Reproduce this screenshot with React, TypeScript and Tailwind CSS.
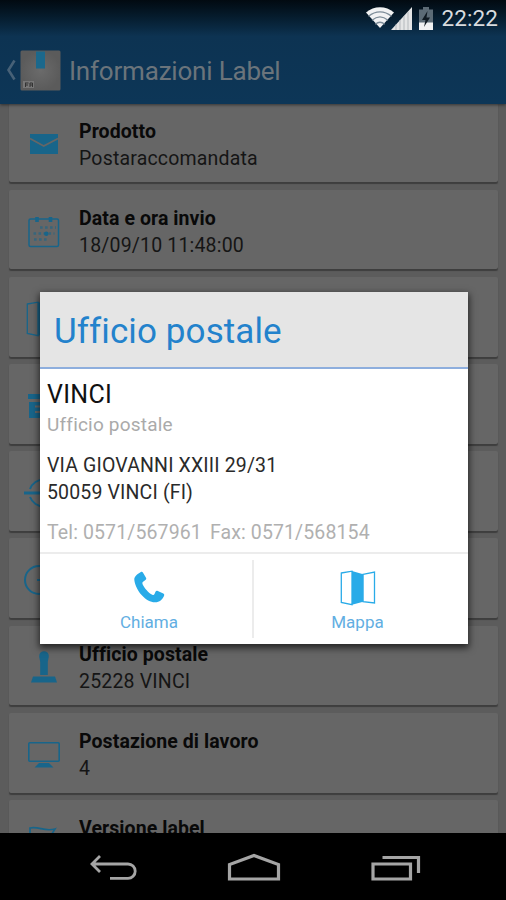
import React from 'react';

const CalendarIcon = () => (
  <svg width="32" height="32" viewBox="0 0 32 32" fill="none" stroke="currentColor" strokeWidth="1.5">
    <rect x="1" y="3" width="29.5" height="27.5" rx="1.5" />
    <path d="M9 1v5M22.5 1v5" strokeWidth="3.6" />
    <path d="M12 11.5h16M5.5 17.5h21M6 23.5h15" strokeWidth="2.4" strokeDasharray="2.6 2.4" opacity=".6" />
    <circle cx="18.3" cy="17.8" r="2.2" fill="currentColor" stroke="none" />
  </svg>
);

const MapIcon = () => (
  <svg width="36" height="36" viewBox="0 0 36 36" fill="none" stroke="currentColor" strokeWidth="1.3">
    <path d="M1.3 3 12 1.2v33.4L1.3 32.4zM23 4.3 34.5 2v31L23 31.6z" />
    <path d="M12 1 23.2 4.2v27.6L12 34.8z" fill="currentColor" stroke="none" />
  </svg>
);

const rows = [
  {
    title: 'Prodotto',
    value: 'Postaraccomandata',
    icon: (
      <svg width="28" height="20" viewBox="0 0 28 20">
        <path d="M0 0h28v20H0z" fill="currentColor" />
        <path d="M0 4.5 13.7 12 28 4.5" fill="none" stroke="#666666" strokeWidth="1.7" />
      </svg>
    ),
  },
  { title: 'Data e ora invio', value: '18/09/10 11:48:00', icon: <CalendarIcon /> },
  { title: '', value: '', icon: <MapIcon /> },
  {
    title: '',
    value: '',
    icon: (
      <svg width="32" height="24" viewBox="0 0 32 24" fill="currentColor">
        <path d="M0 0h32v5H0zM1 8h30v16H1z" />
        <path d="M7 12.5h14M7 18h14" stroke="#666666" strokeWidth="2" />
      </svg>
    ),
  },
  {
    title: '',
    value: '',
    icon: (
      <svg width="42" height="42" viewBox="0 0 42 42" fill="none" stroke="currentColor" strokeWidth="2">
        <path d="M7 17a15 15 0 0 1 28 0M7 25a15 15 0 0 0 28 0" />
        <path d="M1 21h40" strokeWidth="3" />
      </svg>
    ),
  },
  {
    title: '',
    value: '',
    icon: (
      <svg width="42" height="32" viewBox="0 0 42 32" fill="none" stroke="currentColor" strokeWidth="2">
        <circle cx="16" cy="16" r="14" />
        <path d="M14 16h10" />
      </svg>
    ),
  },
  {
    title: 'Ufficio postale',
    value: '25228 VINCI',
    icon: (
      <svg width="26" height="34" viewBox="0 0 26 34" fill="currentColor">
        <path d="M8.2 6a4.8 4.8 0 0 1 9.6 0c0 2-.8 4-1 6v13H9.2V12c-.2-2-1-4-1-6z" />
        <path d="M2 26.5h22l2 6H0z" />
      </svg>
    ),
  },
  {
    title: 'Postazione di lavoro',
    value: '4',
    icon: (
      <svg width="32" height="26" viewBox="0 0 32 26">
        <rect x=".8" y=".8" width="30.4" height="18.4" rx="1" fill="none" stroke="currentColor" strokeWidth="1.6" />
        <path d="M11 21h10l4.5 4.5h-19z" fill="currentColor" />
      </svg>
    ),
  },
  {
    title: 'Versione label',
    value: '',
    icon: (
      <svg width="32" height="34" viewBox="0 0 32 34" fill="none" stroke="currentColor" strokeWidth="1.7">
        <path d="M2 32V3c9-2 14 4 25 1l-5 8 5 7c-10 3-18-3-24-1" />
      </svg>
    ),
  },
];

const StatusBar = () => (
  <div className="flex h-9 items-center justify-end pr-[8px] text-[#d9dcdf]">
    <svg width="28" height="22" viewBox="0 0 28 22">
      <path d="M0 5.5C8-1.6 20-1.6 28 5.5L14 21z" fill="#f1f2f3" />
      <path d="M2.5 9.3c7-5.9 16-5.9 23 0M6 13.3c5-4.2 11-4.2 16 0M9.3 17.2c3-2.5 6.4-2.5 9.4 0" fill="none" stroke="#7d8c98" strokeWidth="1.3" />
    </svg>
    <svg className="-ml-[3px]" width="21" height="23" viewBox="0 0 21 23">
      <path d="M0 23 21 0v23z" fill="#e4e5e6" />
      <path d="M5 17.5V23M9 13v10M13 9v14M17 5v18" stroke="#b3b8bc" strokeWidth="1" />
    </svg>
    <svg className="ml-[7px]" width="14" height="23" viewBox="0 0 14 23">
      <path d="M4 0h6v2.5h4V16H0V2.5h4z" fill="#5c6b76" />
      <path d="M0 15.5h14V23H0z" fill="#f1f2f3" />
      <path d="M8.5 4 3 13h3.5L5 20l6-9.5H7.5z" fill="#101a22" />
    </svg>
    <span className="ml-[8px] text-[22.5px] leading-9 tracking-[0.1px]">22:22</span>
  </div>
);

const ActionBar = () => (
  <div className="flex h-[68px] items-center pl-[6px]">
    <svg width="10" height="22" viewBox="0 0 10 22" fill="none" stroke="#476177" strokeWidth="2.6">
      <path d="M8.5 1.5 2.5 11l6 9.5" />
    </svg>
    <svg className="ml-[4px]" width="41" height="41" viewBox="0 0 41 41">
      <defs>
        <radialGradient id="box">
          <stop offset="0" stopColor="#6b6b6b" />
          <stop offset="1" stopColor="#5b5b5b" />
        </radialGradient>
      </defs>
      <rect x=".5" y=".5" width="40" height="40" rx="1.5" fill="url(#box)" />
      <path d="M16 1.5h9v17h-9z" fill="#1b688c" />
      <path d="M3 31h11v7H3z" fill="#777777" />
      <path d="M5 33h3.5M5.5 33v4M5.5 35h2.5M10 33h2.5v2H10zM10 35v2M12.5 35v2" stroke="#333333" strokeWidth="1" fill="none" />
    </svg>
    <h1 className="ml-[8px] pt-px text-[26px] leading-8 tracking-[-0.2px] text-[#6b747b]">Informazioni Label</h1>
  </div>
);

const NavBar = () => (
  <div className="flex h-[67px] shrink-0 items-center bg-black text-[#a5a5a5]">
    <svg className="ml-[89px]" width="48" height="28" viewBox="0 0 48 28" fill="none" stroke="currentColor" strokeWidth="2.8">
      <path d="M11 3 3 11l8 8M3 11h36a7.2 7.2 0 0 1 0 14.400H21" />
    </svg>
    <svg className="ml-[89px]" width="56" height="30" viewBox="0 0 56 30" fill="none" stroke="currentColor" strokeWidth="3.2">
      <path d="M3.500 27V12.500l24.500-9 24.500 9V27z" />
    </svg>
    <svg className="ml-[89px]" width="50" height="28" viewBox="0 0 50 28" fill="none" stroke="currentColor" strokeWidth="3.2">
      <path d="M2 11h37.500v15H2zM11.500 4.500h36V20" />
    </svg>
  </div>
);

const OfficeDialog = () => (
  <div className="absolute left-[40px] top-[292px] flex h-[352px] w-[428px] flex-col bg-white shadow-[0_3px_7px_1px_rgba(0,0,0,0.65)]">
    <div className="h-[77px] border-b-2 border-[#8eaedd] bg-[#e5e5e5] pl-[14px] pt-[18px]">
      <h2 className="text-[35px] leading-[44px] tracking-[0.1px] text-[#2382cc]">Ufficio postale</h2>
    </div>
    <div className="flex h-[185px] flex-col whitespace-nowrap border-b-2 border-[#ececec] pl-[7px] pt-[10px]">
      <p className="text-[25px] leading-8 tracking-[0.3px] text-[#111111]">VINCI</p>
      <p className="text-[19px] leading-7 tracking-[0.2px] text-[#aaaaaa]">Ufficio postale</p>
      <div className="mt-[13px] text-[19.5px] leading-[27px] tracking-[0.15px] text-[#2a2a2a]">
        <p>VIA GIOVANNI XXIII 29/31</p>
        <p>50059 VINCI (FI)</p>
      </div>
      <p className="mt-[13px] flex gap-[8px] text-[19.5px] leading-7 tracking-[0.12px] text-[#b0b0b0]">
        <span>Tel: 0571/567961</span>
        <span>Fax: 0571/568154</span>
      </p>
    </div>
    <div className="flex flex-1 py-[6px] text-[17px] leading-6 text-[#62aee2]">
      <div className="flex w-[214px] flex-col items-center border-r-2 border-[#ececec] pl-[6px] pt-[10px]">
        <svg className="text-[#29abe8]" width="34" height="36" viewBox="0 0 34 36" fill="currentColor">
          <path d="M8.5 2.2c1-.8 1.9-.5 2.4.4l3.1 5.2c.5.9.3 1.6-.6 2.3l-2.3 1.7c-.9.7-.9 1.6-.4 2.6 2 3.9 5.6 8.3 9.6 10.3 1 .5 1.7.3 2.2-.6l1-2.4c.5-1.1 1.3-1.3 2.3-.8l5.5 2.7c1 .5 1.2 1.3.7 2.3-1.7 3.7-4.2 6.2-9 6.4C14.5 32.4 3.6 21.2 2.3 9.7c-.2-3.500 3-5.400 6.200-7.500z" />
        </svg>
        <span className="mt-[4px]">Chiama</span>
      </div>
      <div className="flex flex-1 flex-col items-center pr-[7px] pt-[10px]">
        <span className="text-[#29abe8]">
          <MapIcon />
        </span>
        <span className="mt-[4px]">Mappa</span>
      </div>
    </div>
  </div>
);

export default function App() {
  return (
    <div className="relative flex h-[900px] w-[506px] flex-col overflow-hidden bg-[#5c5c5c] font-['Roboto',sans-serif]">
      <header className="relative z-10 h-[104px] shrink-0 bg-linear-to-b from-[#020a11] via-[#0d3352] via-35% to-[#0d3657] shadow-[0_1px_3px_rgba(0,0,0,0.5)]">
        <StatusBar />
        <ActionBar />
      </header>
      <main className="-mt-[1.5px] flex min-h-0 flex-1 flex-col gap-[7.5px] overflow-hidden pl-[9px] pr-[8px]">
        {rows.map((row, index) => (
          <div key={index} className="flex h-[79.7px] shrink-0 items-center rounded-[2px] bg-[#666666] shadow-[0_2px_1px_#3e3e3e]">
            <div className="flex w-[70px] justify-center pt-[4px] text-[#18658a]">{row.icon}</div>
            <div className="pt-[5px] text-[19.5px] leading-[27px] tracking-[0.18px]">
              <p className="font-bold tracking-[0.08px] text-[#090909]">{row.title}</p>
              <p className="h-[27px] text-[#151515]">{row.value}</p>
            </div>
          </div>
        ))}
      </main>
      <NavBar />
      <OfficeDialog />
    </div>
  );
}
